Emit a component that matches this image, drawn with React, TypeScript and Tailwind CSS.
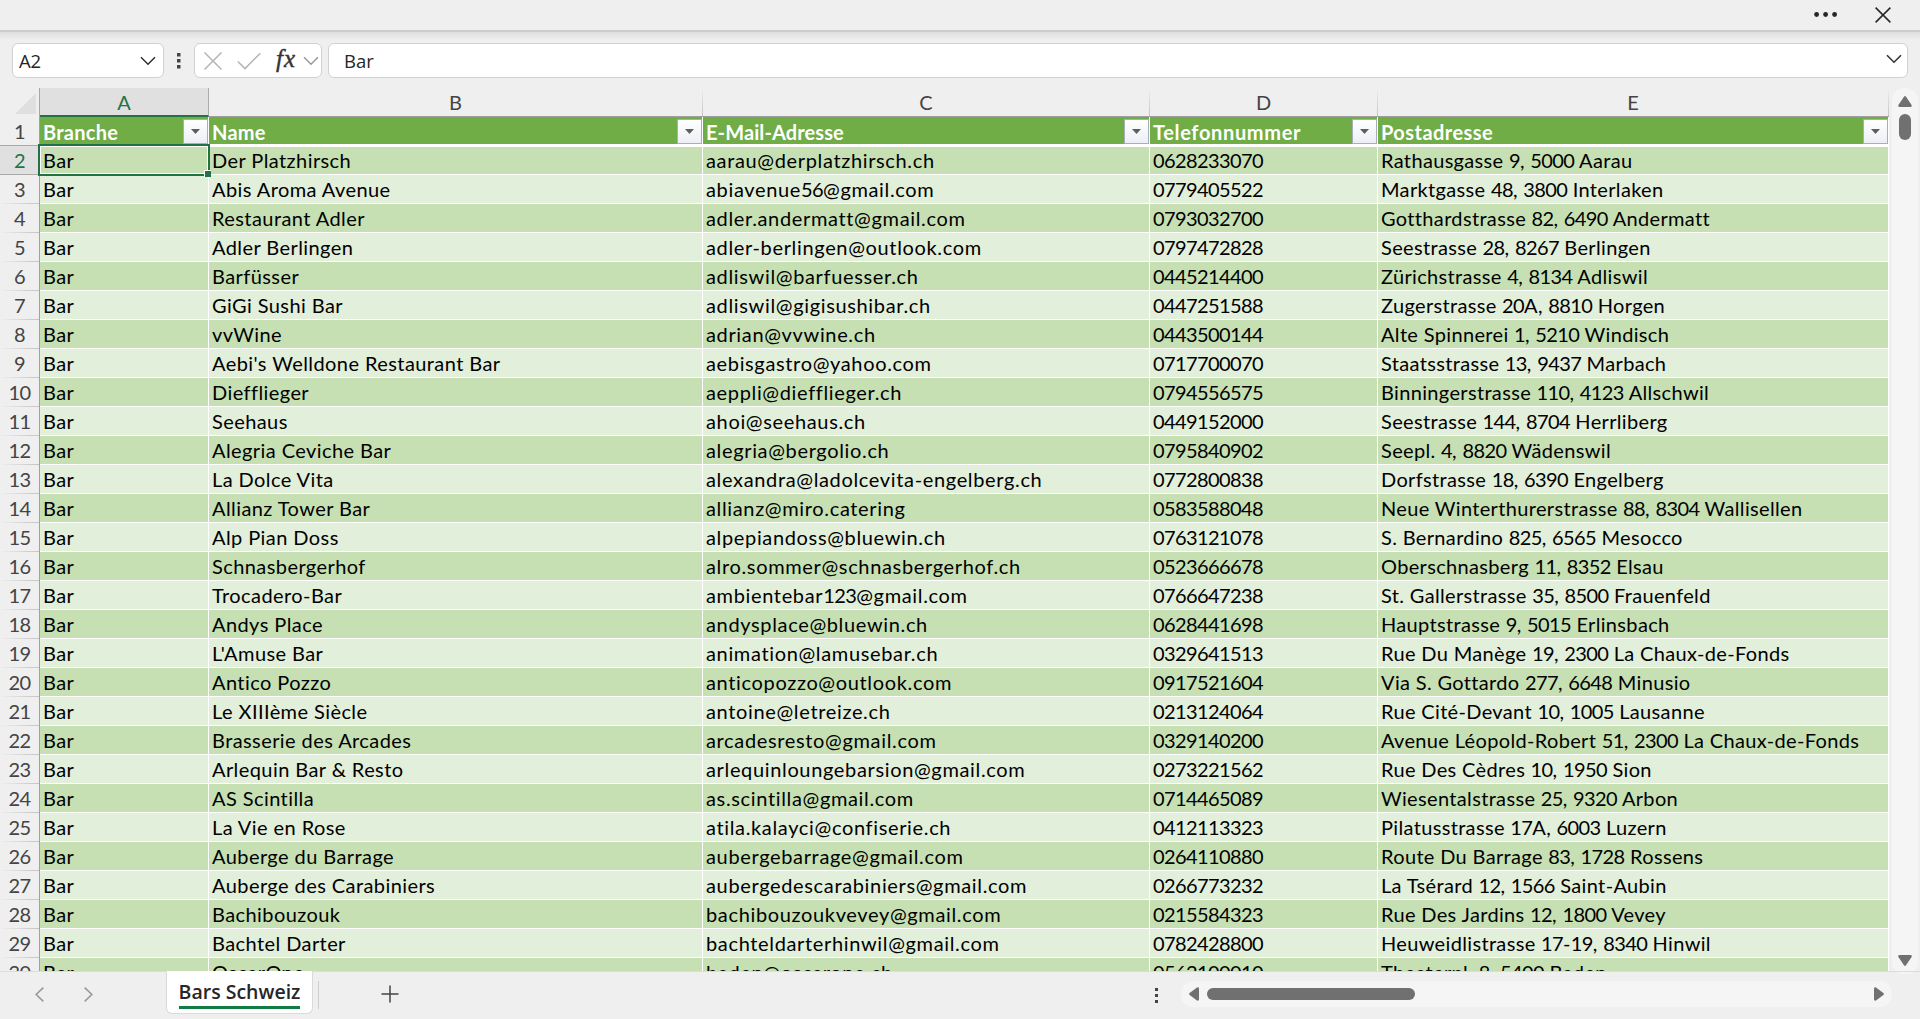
import React from "react";

type Row = [string, string, string, string];

const rows: Row[] = [
  ["Der Platzhirsch", "aarau@derplatzhirsch.ch", "0628233070", "Rathausgasse 9, 5000 Aarau"],
  ["Abis Aroma Avenue", "abiavenue56@gmail.com", "0779405522", "Marktgasse 48, 3800 Interlaken"],
  ["Restaurant Adler", "adler.andermatt@gmail.com", "0793032700", "Gotthardstrasse 82, 6490 Andermatt"],
  ["Adler Berlingen", "adler-berlingen@outlook.com", "0797472828", "Seestrasse 28, 8267 Berlingen"],
  ["Barfüsser", "adliswil@barfuesser.ch", "0445214400", "Zürichstrasse 4, 8134 Adliswil"],
  ["GiGi Sushi Bar", "adliswil@gigisushibar.ch", "0447251588", "Zugerstrasse 20A, 8810 Horgen"],
  ["vvWine", "adrian@vvwine.ch", "0443500144", "Alte Spinnerei 1, 5210 Windisch"],
  ["Aebi's Welldone Restaurant Bar", "aebisgastro@yahoo.com", "0717700070", "Staatsstrasse 13, 9437 Marbach"],
  ["Diefflieger", "aeppli@diefflieger.ch", "0794556575", "Binningerstrasse 110, 4123 Allschwil"],
  ["Seehaus", "ahoi@seehaus.ch", "0449152000", "Seestrasse 144, 8704 Herrliberg"],
  ["Alegria Ceviche Bar", "alegria@bergolio.ch", "0795840902", "Seepl. 4, 8820 Wädenswil"],
  ["La Dolce Vita", "alexandra@ladolcevita-engelberg.ch", "0772800838", "Dorfstrasse 18, 6390 Engelberg"],
  ["Allianz Tower Bar", "allianz@miro.catering", "0583588048", "Neue Winterthurerstrasse 88, 8304 Wallisellen"],
  ["Alp Pian Doss", "alpepiandoss@bluewin.ch", "0763121078", "S. Bernardino 825, 6565 Mesocco"],
  ["Schnasbergerhof", "alro.sommer@schnasbergerhof.ch", "0523666678", "Oberschnasberg 11, 8352 Elsau"],
  ["Trocadero-Bar", "ambientebar123@gmail.com", "0766647238", "St. Gallerstrasse 35, 8500 Frauenfeld"],
  ["Andys Place", "andysplace@bluewin.ch", "0628441698", "Hauptstrasse 9, 5015 Erlinsbach"],
  ["L'Amuse Bar", "animation@lamusebar.ch", "0329641513", "Rue Du Manège 19, 2300 La Chaux-de-Fonds"],
  ["Antico Pozzo", "anticopozzo@outlook.com", "0917521604", "Via S. Gottardo 277, 6648 Minusio"],
  ["Le XIIIème Siècle", "antoine@letreize.ch", "0213124064", "Rue Cité-Devant 10, 1005 Lausanne"],
  ["Brasserie des Arcades", "arcadesresto@gmail.com", "0329140200", "Avenue Léopold-Robert 51, 2300 La Chaux-de-Fonds"],
  ["Arlequin Bar & Resto", "arlequinloungebarsion@gmail.com", "0273221562", "Rue Des Cèdres 10, 1950 Sion"],
  ["AS Scintilla", "as.scintilla@gmail.com", "0714465089", "Wiesentalstrasse 25, 9320 Arbon"],
  ["La Vie en Rose", "atila.kalayci@confiserie.ch", "0412113323", "Pilatusstrasse 17A, 6003 Luzern"],
  ["Auberge du Barrage", "aubergebarrage@gmail.com", "0264110880", "Route Du Barrage 83, 1728 Rossens"],
  ["Auberge des Carabiniers", "aubergedescarabiniers@gmail.com", "0266773232", "La Tsérard 12, 1566 Saint-Aubin"],
  ["Bachibouzouk", "bachibouzoukvevey@gmail.com", "0215584323", "Rue Des Jardins 12, 1800 Vevey"],
  ["Bachtel Darter", "bachteldarterhinwil@gmail.com", "0782428800", "Heuweidlistrasse 17-19, 8340 Hinwil"],
  ["OscarOne", "baden@oscarone.ch", "0562100010", "Theaterpl. 8, 5400 Baden"],
];

const headers = ["Branche", "Name", "E-Mail-Adresse", "Telefonnummer", "Postadresse"];
const headerTracking = ["tracking-[0.25px]", "tracking-[0.25px]", "tracking-[0.1px]", "tracking-[0.65px]", "tracking-[0.45px]"];
const cellTracking = ["tracking-[0.42px]", "tracking-[0.42px]", "tracking-[0.65px]", "tracking-[0.42px]", "tracking-[0.34px]"];
const letters = ["A", "B", "C", "D", "E"];
const grid = "grid grid-cols-[40px_169px_494px_447px_228px_511px] grid-rows-[29px] h-[29px]";

// Digits are set tighter than letters so that every figure takes 11px.
function CellText({ text }: { text: string }) {
  return (
    <>
      {text.split(/(\d+)/).map((part, i) =>
        i % 2 === 1 ? (
          <span key={i} className="-tracking-[0.6px]">
            {part}
          </span>
        ) : (
          part
        ),
      )}
    </>
  );
}

function FilterButton() {
  return (
    <span className="mt-[2px] flex h-[25px] w-[25px] shrink-0 items-center justify-center border border-[#a9adb5] bg-linear-to-b from-white to-[#eceff6]">
      <svg width="9" height="5" viewBox="0 0 9 5">
        <path d="M0 0h9L4.5 5z" fill="#5f5f5f" />
      </svg>
    </span>
  );
}

function Chevron({ color, className }: { color: string; className?: string }) {
  return (
    <svg width="16" height="10" viewBox="0 0 16 10" fill="none" className={className}>
      <path d="M1 1.2L8 8.2L15 1.2" stroke={color} strokeWidth="1.6" />
    </svg>
  );
}

function VDots({ size = 4 }: { size?: number }) {
  return (
    <svg width="4" height="16" viewBox="0 0 4 16" fill="#444" className="shrink-0">
      <rect width={size} height={size} y="0" />
      <rect width={size} height={size} y="6" />
      <rect width={size} height={size} y="12" />
    </svg>
  );
}

function TitleBar() {
  return (
    <div className="flex h-[30px] shrink-0 items-center justify-end">
      <svg width="24" height="6" viewBox="0 0 24 6" fill="#262626" className="mr-[37px]">
        <circle cx="2.6" cy="2.5" r="2.4" />
        <circle cx="11.6" cy="2.5" r="2.4" />
        <circle cx="20.6" cy="2.5" r="2.4" />
      </svg>
      <svg width="16" height="16" viewBox="0 0 16 16" fill="none" className="mr-[29px]">
        <path d="M.6.6l14.8 14.8M15.4.6L.6 15.4" stroke="#262626" strokeWidth="1.5" />
      </svg>
    </div>
  );
}

function FormulaBar() {
  return (
    <div className="flex h-[58px] shrink-0 flex-col">
      <div className="h-[2px] bg-[#cbcbcb]" />
      <div className="h-[8px] bg-linear-to-b from-[#dedede] to-[#efefef]" />
      <div className="mt-[3px] flex h-[35px] pl-3 font-['Open_Sans',sans-serif] text-[18.5px] text-[#262626]">
        <div className="flex w-[152px] items-center justify-between rounded-md border border-[#d1d1d1] bg-white pr-[7px] pl-[6px]">
          <span className="-tracking-[0.1px]">A2</span>
          <Chevron color="#333" />
        </div>
        <div className="flex w-[30px] items-center justify-center">
          <VDots size={3.5} />
        </div>
        <div className="flex w-[128px] items-center rounded-md border border-[#d1d1d1] bg-white pl-[9px]">
          <svg width="18" height="18" viewBox="0 0 18 18" fill="none">
            <path d="M.5.5l17 17M17.5.5l-17 17" stroke="#b4b4b4" strokeWidth="1.5" />
          </svg>
          <svg width="24" height="18" viewBox="0 0 24 18" fill="none" className="ml-[15px]">
            <path d="M.8 9.5L8 16.6L23.3 1.2" stroke="#b4b4b4" strokeWidth="1.5" />
          </svg>
          <span className="-mt-[3px] ml-[15px] w-[23px] font-['Liberation_Serif',serif] text-[25px] leading-[30px] tracking-[1px] text-[#333] italic [-webkit-text-stroke:0.4px_#333]">
            fx
          </span>
          <Chevron color="#9a9a9a" className="ml-[4px]" />
        </div>
        <div className="ml-[6px] flex w-[1580px] items-center justify-between rounded-md border border-[#d1d1d1] bg-white pr-[5px] pl-[15px]">
          <span>Bar</span>
          <Chevron color="#333" className="-mt-1" />
        </div>
      </div>
    </div>
  );
}

function ColumnHeaders() {
  return (
    <div className={`${grid} text-center text-[20px] leading-[29px] text-[#444]`}>
      <div className="flex items-end justify-end border-r border-[#a6a6a6] pr-[3px] pb-[3px]">
        <svg width="21" height="21" viewBox="0 0 21 21">
          <path d="M21 0v21H0z" fill="#dfdfdf" />
        </svg>
      </div>
      {letters.map((l, i) =>
        i === 0 ? (
          <div key={l} className="border-r border-b-2 border-r-[#ababab] border-b-[#217346] bg-[#e0e0e0] text-[#217346]">
            {l}
          </div>
        ) : (
          <div key={l} className="flex border-b border-[#9f9f9f]">
            <span className="flex-1">{l}</span>
            <span className="w-px bg-linear-to-b from-[#efefef] to-[#c4c4c4]" />
          </div>
        ),
      )}
    </div>
  );
}

function RowNumber({ n }: { n: number }) {
  const selected = n === 2;
  return (
    <div
      className={`flex flex-col border-r border-[#a0a0a0] text-center text-[20px] leading-[29px] ${
        selected ? "bg-[#e0e0e0] text-[#217346]" : "text-[#444]"
      }`}
    >
      <span className="h-7 -tracking-[0.6px]">{n}</span>
      <span className={selected || n === 1 ? "h-px bg-[#ababab]" : "h-px bg-linear-to-r from-[#efefef] to-[#c4c4c4]"} />
    </div>
  );
}

function Sheet() {
  return (
    <div className="h-[883px] w-[1889px] overflow-hidden font-['Lato',sans-serif] [font-variant-ligatures:none]">
      <ColumnHeaders />
      <div className={grid}>
        <RowNumber n={1} />
        {headers.map((h, j) => (
          <div
            key={h}
            className="flex justify-between border-r border-b-2 border-white bg-[#70ad47] pl-[3px] text-[20px] leading-[30px] font-bold text-white"
          >
            <span className={headerTracking[j]}>{h}</span>
            <FilterButton />
          </div>
        ))}
      </div>
      {rows.map((r, i) => (
        <div key={r[2]} className={grid}>
          <RowNumber n={i + 2} />
          {["Bar", ...r].map((c, j) => (
            <div
              key={j}
              className={`relative border-r border-b border-white pl-[3px] text-[20px] leading-[29px] whitespace-nowrap text-black ${
                i % 2 === 0 ? "bg-[#c6e0b4]" : "bg-[#e2efda]"
              }`}
            >
              {i === 0 && <span className="absolute inset-x-0 top-0 h-px bg-white" />}
              <span className={cellTracking[j]}>
                <CellText text={c} />
              </span>
              {i === 0 && j === 0 && (
                <>
                  <span className="absolute -inset-[2px] z-10 border-2 border-[#217346] shadow-[inset_0_0_0_1px_white]" />
                  <span className="absolute -right-[3px] -bottom-[3px] z-20 h-[7px] w-[7px] border-t border-l border-white bg-[#217346]" />
                </>
              )}
            </div>
          ))}
        </div>
      ))}
    </div>
  );
}

function VerticalScroll() {
  return (
    <div className="ml-[3px] flex h-[886px] w-[26px] flex-col items-center rounded-xl bg-[#f5f5f5] pt-2 pb-2">
      <svg width="14" height="11" viewBox="0 0 14 11" fill="#707070">
        <path d="M6 .8Q7-.6 8 .8L13.6 9Q14.2 10.8 12.6 11H1.4Q-.2 10.8.4 9z" />
      </svg>
      <div className="mt-[7px] h-[26px] w-3 rounded-full bg-[#707070]" />
      <svg width="14" height="11" viewBox="0 0 14 11" fill="#707070" className="mt-auto">
        <path d="M6 10.2Q7 11.6 8 10.2L13.6 2Q14.2.2 12.6 0H1.4Q-.2.2.4 2z" />
      </svg>
    </div>
  );
}

function BottomBar() {
  return (
    <div className="flex h-[48px] w-full">
      <div className="flex h-full w-[166px] items-start border-t border-[#dcdcdc] pt-[15px] pl-[35px]">
        <svg width="9" height="15" viewBox="0 0 9 15" fill="none" stroke="#999" strokeWidth="1.6">
          <path d="M8.3.6L1.2 7.5l7.1 6.9" />
        </svg>
        <svg width="9" height="15" viewBox="0 0 9 15" fill="none" stroke="#999" strokeWidth="1.6" className="ml-[40px]">
          <path d="M.7.6l7.1 6.9L.7 14.4" />
        </svg>
      </div>
      <div className="flex h-[43px] w-[147px] justify-center rounded-b-md border border-t-0 border-[#dadada] bg-white pt-[4px]">
        <div className="h-[34px] border-b-3 border-[#107c41] font-['Open_Sans',sans-serif] text-[19.5px] leading-[34px] font-semibold whitespace-nowrap text-[#262626]">
          Bars Schweiz
        </div>
      </div>
      <div className="flex h-full w-[1607px] items-start border-t border-[#dcdcdc]">
        <span className="mt-[9px] ml-[5px] h-7 w-px bg-[#cfcfcf]" />
        <svg width="18" height="18" viewBox="0 0 18 18" fill="none" stroke="#444" strokeWidth="1.5" className="mt-[13px] ml-[62px]">
          <path d="M9 .5v17M.5 9h17" />
        </svg>
        <div className="mt-[16px] ml-[756px]">
          <VDots size={3} />
        </div>
        <div className="mt-[9px] ml-[22px] flex h-[26px] w-[711px] shrink-0 items-center rounded-xl bg-[#f5f5f5] pr-2 pl-2">
          <svg width="10" height="14" viewBox="0 0 10 14" fill="#707070">
            <path d="M.6 6Q-.4 7 .6 8L8 13.6Q9.8 14.2 10 12.6V1.4Q9.8-.2 8 .4z" />
          </svg>
          <div className="ml-2 h-3 w-[208px] rounded-full bg-[#707070]" />
          <svg width="10" height="14" viewBox="0 0 10 14" fill="#707070" className="ml-auto">
            <path d="M9.4 6Q10.4 7 9.4 8L2 13.6Q.2 14.2 0 12.6V1.4Q.2-.2 2 .4z" />
          </svg>
        </div>
      </div>
    </div>
  );
}

export default function App() {
  return (
    <div className="flex h-[1019px] w-[1920px] flex-col overflow-hidden bg-[#efefef]">
      <TitleBar />
      <FormulaBar />
      <div className="flex h-[883px] shrink-0">
        <Sheet />
        <VerticalScroll />
      </div>
      <BottomBar />
    </div>
  );
}
